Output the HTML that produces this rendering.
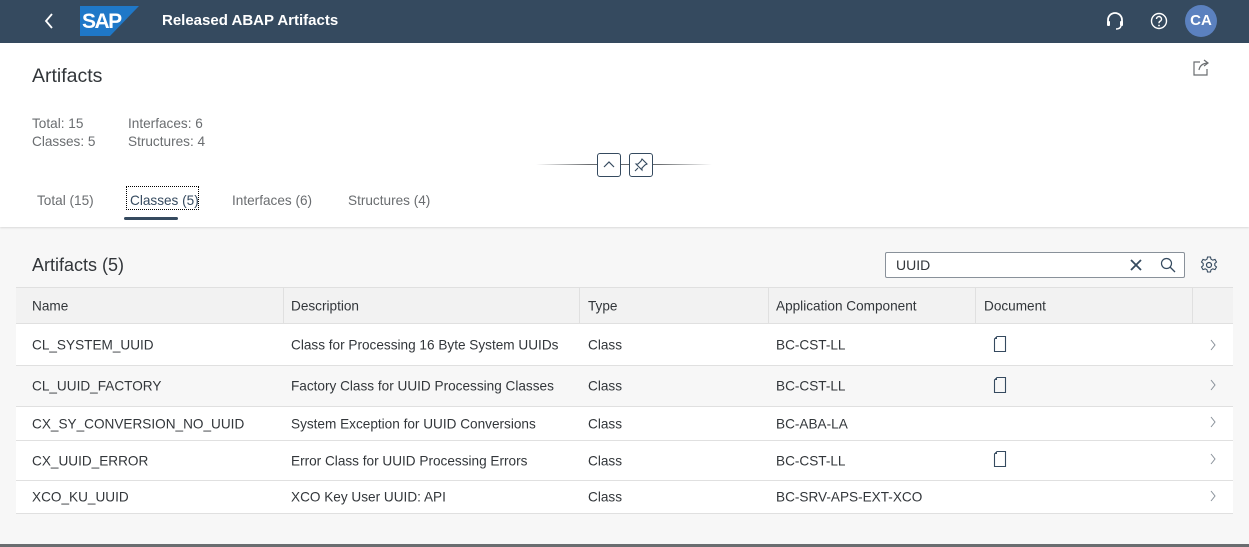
<!DOCTYPE html>
<html><head><meta charset="utf-8"><style>
*{margin:0;padding:0;box-sizing:border-box}
body{width:1249px;height:547px;overflow:hidden;font-family:"Liberation Sans",sans-serif;background:#f7f7f7;position:relative;color:#32363a}
.a{position:absolute;white-space:nowrap}
.shell{left:0;top:0;width:1249px;height:43px;background:#354a5f}
.t{font-size:14px;color:#32363a}
.g{color:#6a6d70}
.row{position:absolute;left:16px;width:1217px;background:#fff;border-bottom:1px solid #e0e0e0}
.row span{position:absolute;font-size:13.6px;color:#32363a;top:50%;transform:translateY(-50%);white-space:nowrap}
.hdr{background:#f2f2f2;border-top:1px solid #e0e0e0}
.vl{position:absolute;top:0;bottom:0;width:1px;background:#e0e0e0}
</style></head><body>
<div class="a shell"></div>
<svg class="a" style="left:43px;top:12px" width="12" height="18" viewBox="0 0 12 18"><path d="M9 2 L3 9 L9 16" stroke="#fff" stroke-width="1.8" fill="none"/></svg>
<svg class="a" style="left:80px;top:6px" width="60" height="30" viewBox="0 0 60 30"><path d="M0 0H59L30 30H0Z" fill="#1f78c8"/><text x="2" y="22" font-family="Liberation Sans" font-weight="bold" font-size="21" fill="#fff" letter-spacing="-1.5">SAP</text></svg>
<div class="a" style="left:162px;top:12px;font-size:15px;font-weight:bold;color:#fff">Released ABAP Artifacts</div>
<svg class="a" style="left:1105px;top:11px" width="20" height="20" viewBox="0 0 20 20"><path d="M3 12 V9 a7 7 0 0 1 14 0 V12" stroke="#fff" stroke-width="1.8" fill="none"/><rect x="2" y="10" width="3" height="5" rx="1" fill="#fff"/><rect x="15" y="10" width="3" height="5" rx="1" fill="#fff"/><path d="M16 15 Q15 18 11 18" stroke="#fff" stroke-width="1.5" fill="none"/></svg>
<svg class="a" style="left:1149px;top:11px" width="20" height="20" viewBox="0 0 20 20"><circle cx="10" cy="10" r="7.5" stroke="#fff" stroke-width="1.4" fill="none"/><path d="M7.5 8 a2.5 2.5 0 1 1 3.5 2.3 c-1 .5 -1 1 -1 2" stroke="#fff" stroke-width="1.4" fill="none"/><circle cx="10" cy="14.5" r=".9" fill="#fff"/></svg>
<div class="a" style="left:1185px;top:5px;width:32px;height:32px;border-radius:50%;background:#5b81bf;color:#fff;font-size:15px;font-weight:bold;text-align:center;line-height:32px">CA</div>

<div class="a" style="left:0;top:43px;width:1249px;height:184px;background:#fff;box-shadow:0 1px 2px rgba(0,0,0,.12)"></div>
<div class="a" style="left:32px;top:65px;font-size:19.5px;color:#32363a">Artifacts</div>
<svg class="a" style="left:1191px;top:57px" width="20" height="20" viewBox="0 0 20 20"><path d="M9 5H3V18H16V12" stroke="#6a6d70" stroke-width="1.2" fill="none"/><path d="M8 13 Q9 7 16 6 M13 3 L17 6 L13 9" stroke="#6a6d70" stroke-width="1.2" fill="none"/></svg>
<div class="a g" style="left:32px;top:115px;font-size:13.6px;line-height:18px">Total: 15<br>Classes: 5</div>
<div class="a g" style="left:128px;top:115px;font-size:13.6px;line-height:18px">Interfaces: 6<br>Structures: 4</div>
<div class="a" style="left:536px;top:164px;width:176px;height:1px;background:linear-gradient(90deg,#fff,#6a6d70 30%,#6a6d70 70%,#fff)"></div>
<div class="a" style="left:597px;top:153px;width:24px;height:24px;border:1px solid #354a5f;border-radius:3px;background:#fff"><svg width="22" height="22" viewBox="0 0 22 22"><path d="M6 13 L11 8 L16 13" stroke="#354a5f" stroke-width="1.2" fill="none"/></svg></div>
<div class="a" style="left:629px;top:153px;width:24px;height:24px;border:1px solid #354a5f;border-radius:3px;background:#fff"><svg width="22" height="22" viewBox="0 0 22 22"><path d="M12 5 L17 10 L15 11 L12 14 L12 16 L6 10 L8 10 L11 7 Z M8 14 L5 17" stroke="#354a5f" stroke-width="1.1" fill="none"/></svg></div>
<div class="a g" style="left:37px;top:193px;font-size:13.6px">Total (15)</div>
<div class="a" style="left:126px;top:186px;width:73px;height:24px;border:1px dotted #000"></div>
<div class="a" style="left:130px;top:193px;font-size:13.6px;color:#354a5f">Classes (5)</div>
<div class="a" style="left:124px;top:217px;width:54px;height:3px;background:#354a5f;border-radius:2px"></div>
<div class="a g" style="left:232px;top:193px;font-size:13.6px">Interfaces (6)</div>
<div class="a g" style="left:348px;top:193px;font-size:13.6px">Structures (4)</div>

<div class="a" style="left:32px;top:255px;font-size:18px;color:#32363a">Artifacts (5)</div>
<div class="a" style="left:885px;top:252px;width:300px;height:26px;border:1px solid #89919a;border-radius:2px;background:#fff"></div>
<div class="a t" style="left:896px;top:257px">UUID</div>
<svg class="a" style="left:1128px;top:257px" width="16" height="16" viewBox="0 0 16 16"><path d="M3 3L13 13M13 3L3 13" stroke="#354a5f" stroke-width="1.8"/></svg>
<svg class="a" style="left:1159px;top:256px" width="18" height="18" viewBox="0 0 18 18"><circle cx="7.5" cy="7.5" r="5" stroke="#354a5f" stroke-width="1.2" fill="none"/><path d="M11 11L16 16" stroke="#354a5f" stroke-width="1.3"/></svg>
<svg class="a" style="left:1199px;top:255px" width="20" height="20" viewBox="0 0 20 20"><circle cx="10" cy="10" r="2.5" stroke="#354a5f" stroke-width="1.2" fill="none"/><path d="M8.5 2h3l.5 2.2 1.8 1 2.2-.8 1.5 2.6-1.7 1.5v2l1.7 1.5-1.5 2.6-2.2-.8-1.8 1-.5 2.2h-3l-.5-2.2-1.8-1-2.2.8-1.5-2.6 1.7-1.5v-2L2.5 7l1.5-2.6 2.2.8 1.8-1z" stroke="#354a5f" stroke-width="1.1" fill="none"/></svg>

<div class="row hdr" style="top:287px;height:37px"><span style="left:16px">Name</span><span style="left:275px">Description</span><span style="left:572px">Type</span><span style="left:760px">Application Component</span><span style="left:968px">Document</span>
<div class="vl" style="left:267px"></div><div class="vl" style="left:563px"></div><div class="vl" style="left:752px"></div><div class="vl" style="left:959px"></div><div class="vl" style="left:1176px"></div></div>

<div class="row" style="top:324px;height:42px"><span style="left:16px">CL_SYSTEM_UUID</span><span style="left:275px">Class for Processing 16 Byte System UUIDs</span><span style="left:572px">Class</span><span style="left:760px">BC-CST-LL</span></div>
<div class="row" style="top:366px;height:41px;background:#f7f7f7"><span style="left:16px">CL_UUID_FACTORY</span><span style="left:275px">Factory Class for UUID Processing Classes</span><span style="left:572px">Class</span><span style="left:760px">BC-CST-LL</span></div>
<div class="row" style="top:407px;height:34px"><span style="left:16px">CX_SY_CONVERSION_NO_UUID</span><span style="left:275px">System Exception for UUID Conversions</span><span style="left:572px">Class</span><span style="left:760px">BC-ABA-LA</span></div>
<div class="row" style="top:441px;height:40px"><span style="left:16px">CX_UUID_ERROR</span><span style="left:275px">Error Class for UUID Processing Errors</span><span style="left:572px">Class</span><span style="left:760px">BC-CST-LL</span></div>
<div class="row" style="top:481px;height:33px"><span style="left:16px">XCO_KU_UUID</span><span style="left:275px">XCO Key User UUID: API</span><span style="left:572px">Class</span><span style="left:760px">BC-SRV-APS-EXT-XCO</span></div>

<svg class="a" style="left:993px;top:335px" width="14" height="18" viewBox="0 0 14 18"><path d="M4 1.5H12.5V16.5H1.5V4Z" stroke="#354a5f" stroke-width="1.1" fill="none"/><path d="M1.5 4L4 1.5V4Z" fill="#354a5f"/></svg>
<svg class="a" style="left:993px;top:376px" width="14" height="18" viewBox="0 0 14 18"><path d="M4 1.5H12.5V16.5H1.5V4Z" stroke="#354a5f" stroke-width="1.1" fill="none"/><path d="M1.5 4L4 1.5V4Z" fill="#354a5f"/></svg>
<svg class="a" style="left:993px;top:450px" width="14" height="18" viewBox="0 0 14 18"><path d="M4 1.5H12.5V16.5H1.5V4Z" stroke="#354a5f" stroke-width="1.1" fill="none"/><path d="M1.5 4L4 1.5V4Z" fill="#354a5f"/></svg>
<svg class="a" style="left:1208px;top:339px" width="10" height="170" viewBox="0 0 10 170"><g stroke="#89919a" stroke-width="1" fill="none"><path d="M3 1L7 6L3 11"/><path d="M3 41L7 46L3 51"/><path d="M3 78L7 83L3 88"/><path d="M3 115L7 120L3 125"/><path d="M3 152L7 157L3 162"/></g></svg>

<div class="a" style="left:0;top:544px;width:1249px;height:3px;background:#6a6d70"></div>
</body></html>
